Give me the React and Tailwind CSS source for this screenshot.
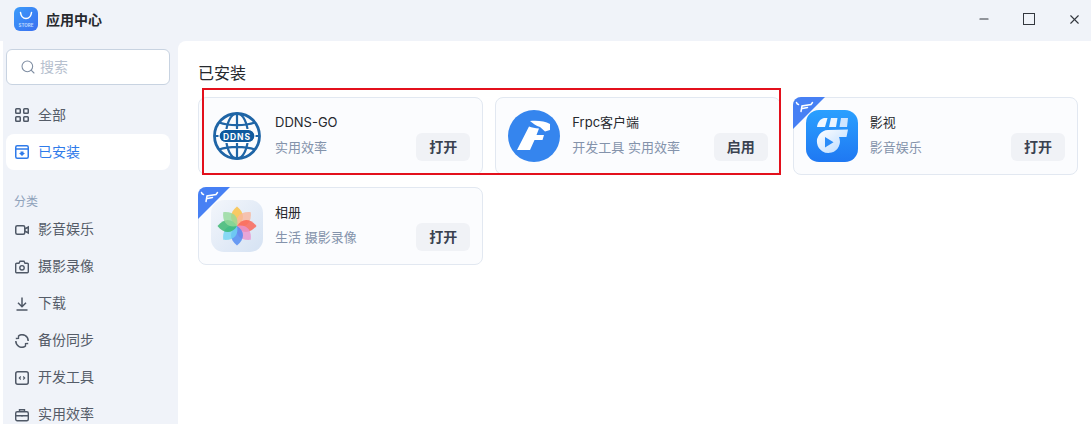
import { Search, Minus, X } from "lucide-react";

const FONT = "font-['Inter','Noto_Sans_CJK_SC',sans-serif]";

function GridIcon() {
  return (
    <svg width="14" height="14" viewBox="0 0 14 14" fill="none" stroke="#4f5866" strokeWidth="1.500">
      <rect x="0.750" y="0.750" width="4.500" height="4.500" rx="0.800" />
      <rect x="8.750" y="0.750" width="4.500" height="4.500" rx="0.800" />
      <rect x="0.750" y="8.750" width="4.500" height="4.500" rx="0.800" />
      <rect x="8.750" y="8.750" width="4.500" height="4.500" rx="0.800" />
    </svg>
  );
}

function VideoIcon() {
  return (
    <svg width="14" height="14" viewBox="0 0 14 14" fill="none" stroke="#4f5866" strokeWidth="1.500">
      <rect x="0.750" y="2.750" width="9" height="8.500" rx="1.500" />
      <path d="M9.750 6l3.500-2v6l-3.500-2" />
    </svg>
  );
}

function CameraIcon() {
  return (
    <svg width="14" height="14" viewBox="0 0 14 14" fill="none" stroke="#4f5866" strokeWidth="1.400">
      <path d="M.7 4.200a1 1 0 0 1 1-1h2.300L5 1.200h4l1 2h2.300a1 1 0 0 1 1 1v7.600a1 1 0 0 1-1 1H1.700a1 1 0 0 1-1-1z" />
      <circle cx="7" cy="7.800" r="2.200" />
    </svg>
  );
}

function DownloadIcon() {
  return (
    <svg width="14" height="14" viewBox="0 0 14 14" fill="none" stroke="#4f5866" strokeWidth="1.500">
      <path d="M7 .5v9M3 5.800l4 4 4-4M1.500 13h11" />
    </svg>
  );
}

function SyncIcon() {
  return (
    <svg width="14" height="14" viewBox="0 0 14 14" fill="none" stroke="#4f5866" strokeWidth="1.500">
      <path d="M3.500 1.800a6.200 6.200 0 0 1 9.700 5.200M10.500 12.200A6.200 6.200 0 0 1 .8 7" />
      <path d="M.8 4.500l2.700-.200V1.500M13.200 9.500l-2.700.200v2.800" strokeWidth="1.300" />
    </svg>
  );
}

function CodeIcon() {
  return (
    <svg width="14" height="14" viewBox="0 0 14 14" fill="none" stroke="#4f5866" strokeWidth="1.500">
      <rect x="0.750" y="0.750" width="12.500" height="12.500" rx="2" />
      <path d="M5.800 5.500L4.300 7l1.500 1.500M8.200 5.500L9.700 7 8.200 8.500" strokeWidth="1.100" />
    </svg>
  );
}

function CaseIcon() {
  return (
    <svg width="14" height="14" viewBox="0 0 14 14" fill="none" stroke="#4f5866" strokeWidth="1.400">
      <rect x="0.700" y="3.700" width="12.600" height="9" rx="1.500" />
      <path d="M4.500 3.700V1.700h5v2M.7 7.800h12.600M7 7v1.800" />
    </svg>
  );
}

const CATEGORIES = [
  { label: "影音娱乐", icon: VideoIcon },
  { label: "摄影录像", icon: CameraIcon },
  { label: "下载", icon: DownloadIcon },
  { label: "备份同步", icon: SyncIcon },
  { label: "开发工具", icon: CodeIcon },
  { label: "实用效率", icon: CaseIcon },
];

function StoreLogo() {
  return (
    <svg width="24" height="24" viewBox="0 0 24 24">
      <defs>
        <linearGradient id="store" x1="0" y1="0" x2="1" y2="1">
          <stop offset="0" stopColor="#3b9bfa" />
          <stop offset="1" stopColor="#3b6ff0" />
        </linearGradient>
      </defs>
      <rect width="24" height="24" rx="6" fill="url(#store)" />
      <path d="M6.500 5.500c.5 4 2.500 6 5.500 6s5-2 5.500-6" fill="none" stroke="#fff" strokeWidth="1.500" strokeLinecap="round" />
      <text x="12" y="19.500" textAnchor="middle" fontSize="4.500" fontWeight="700" fill="#bcd8ff" fontFamily="Inter">STORE</text>
    </svg>
  );
}

function InstalledIcon() {
  return (
    <svg width="14" height="14" viewBox="0 0 14 14" fill="none">
      <rect x="0.750" y="0.750" width="12.500" height="12.500" rx="1.500" stroke="#2f7bea" strokeWidth="1.500" />
      <path d="M1 4h12" stroke="#2f7bea" strokeWidth="1.500" />
      <path d="M5.500 6.500h3v1.500h1.500L7 11 4 8h1.500z" fill="#2f7bea" />
    </svg>
  );
}

function DdnsIcon() {
  return (
    <svg width="48" height="48" viewBox="0 0 48 48" fill="none">
      <g stroke="#1f65a6" strokeWidth="2.200">
        <circle cx="24" cy="24" r="22.500" strokeWidth="2.800" />
        <ellipse cx="24" cy="24" rx="11" ry="22.500" />
        <path d="M24 1.500v45M6 10.500c10 3.500 26 3.500 36 0M6 37.500c10-3.500 26-3.500 36 0M2 24h44" />
      </g>
      <rect x="6" y="17.500" width="36" height="13" rx="6.500" fill="#0f5a9e" stroke="#fff" strokeWidth="1.200" />
      <text x="24" y="27.500" textAnchor="middle" fontSize="8.500" fontWeight="700" letterSpacing="0.900" fill="#fff" fontFamily="Inter">DDNS</text>
    </svg>
  );
}

function FrpcIcon() {
  return (
    <svg width="52" height="52" viewBox="0 0 52 52">
      <circle cx="26" cy="26" r="26" fill="#3585ee" />
      <path d="M22 11 C30 10.500 37 11 42 14 L42 20 L37 21.500 L32 17 C28 16 25 13.500 22 11z" fill="#fff" />
      <path d="M21 16.500 C24 17.500 27 18.200 31 18.500 L28.500 25 H36 L34.500 30 H26.500 L22 40 H9z" fill="#fff" />
    </svg>
  );
}

function MovieIcon() {
  return (
    <svg width="52" height="52" viewBox="0 0 52 52">
      <defs>
        <linearGradient id="movie" x1="0" y1="0" x2="0" y2="1">
          <stop offset="0" stopColor="#2aa0ff" />
          <stop offset="1" stopColor="#1f78f2" />
        </linearGradient>
        <linearGradient id="reel" x1="0" y1="0" x2="1" y2="1">
          <stop offset="0" stopColor="#ffffff" />
          <stop offset="1" stopColor="#b7d9ff" />
        </linearGradient>
      </defs>
      <rect width="52" height="52" rx="13" fill="url(#movie)" />
      <path d="M11 17 C11.500 12.500 14 9 18 8 H21.500 L19 17z" fill="#f2f8ff" />
      <path d="M25 8h6.500l-1.500 9h-7z" fill="#eaf4ff" />
      <path d="M35 8h7l-1 9h-7.500z" fill="#cfe5ff" />
      <path d="M42 19.500 L40.500 27 H33 A11.500 11.500 0 1 1 22 20z" fill="url(#reel)" />
      <path d="M19 27v10.500l8.500-5.200z" fill="#2a8cf8" />
    </svg>
  );
}

function AlbumIcon() {
  const petals = [
    { r: 0, c: "#fbbf3d" },
    { r: 45, c: "#f9b79c" },
    { r: 90, c: "#fb5f4f" },
    { r: 135, c: "#e993cf" },
    { r: 180, c: "#4a86f3" },
    { r: 225, c: "#6fd3f2" },
    { r: 270, c: "#33b56a" },
    { r: 315, c: "#94d99a" },
  ];
  return (
    <svg width="52" height="52" viewBox="0 0 52 52">
      <defs>
        <linearGradient id="album" x1="0" y1="0" x2="1" y2="1">
          <stop offset="0" stopColor="#f3f6fb" />
          <stop offset="1" stopColor="#d5e2f3" />
        </linearGradient>
      </defs>
      <rect width="52" height="52" rx="13" fill="url(#album)" />
      {petals.map((p) => (
        <path
          key={p.r}
          d="M26 26 C18 21 18 13 26 6.500 C34 13 34 21 26 26z"
          fill={p.c}
          fillOpacity="0.800"
          transform={`rotate(${p.r} 26 26)`}
        />
      ))}
    </svg>
  );
}

// blue corner ribbon with the little horns mark
function Ribbon() {
  return (
    <svg className="absolute -left-px -top-px" width="33" height="33" viewBox="0 0 33 33">
      <path d="M8 0H32L0 32V8A8 8 0 0 1 8 0z" fill="#4780f4" />
      <path d="M3.500 5.500c.3 1.200 1 1.800 2 2M8 14.500l1-5.500 9-1.500 1.500-2M9.500 11.500l5-1" fill="none" stroke="#fff" strokeWidth="1.500" strokeLinecap="round" />
    </svg>
  );
}

function AppCard({ name, tags, action, icon, ribbon }) {
  return (
    <div className="relative flex h-[78px] items-center rounded-lg border border-[#e2e8f1] bg-[#fbfcfe] pl-3 pr-3">
      {ribbon && <Ribbon />}
      <div className="flex w-[52px] shrink-0 justify-center">{icon}</div>
      <div className="ml-3 flex h-full min-w-0 flex-1 flex-col pt-[14px]">
        <div className="text-[13px] leading-[20px] text-[#26292e]">{name}</div>
        <div className="mt-[5px] text-[13px] leading-[20px] text-[#8493ab]">{tags}</div>
      </div>
      <button className="mt-[22px] flex h-[28px] w-[54px] shrink-0 items-center justify-center rounded-md bg-[#f0f2f6] pb-[2px] text-[14px] font-semibold text-[#3a4250]">
        {action}
      </button>
    </div>
  );
}

export default function App() {
  return (
    <div className={`flex h-screen flex-col overflow-hidden bg-[#f0f3f9] ${FONT}`}>
      {/* Title bar */}
      <header className="flex h-[41px] shrink-0 items-center pb-[3px] pl-[14px]">
        <StoreLogo />
        <span className="ml-2 text-[14px] font-semibold text-[#26292e]">应用中心</span>
        <div className="ml-auto flex items-center gap-[32px] pr-[9px] text-[#33373e]">
          <Minus size={14} strokeWidth={1.800} />
          <span className="h-[12px] w-[12px] border-[1.5px] border-[#33373e]" />
          <X size={15} strokeWidth={1.800} />
        </div>
      </header>

      <div className="flex min-h-0 flex-1">
        {/* Sidebar */}
        <aside className="w-[178px] shrink-0 overflow-hidden border-l-[3px] border-white pl-[3px] pr-2 pt-2">
          <div className="flex h-[36px] items-center gap-[4px] rounded-md border border-[#c8d3e1] bg-white pl-[13px] text-[14px] text-[#b6c0ce]">
            <Search size={16} strokeWidth={1.600} className="text-[#7f8ea3]" />
            <span className="mb-[2px]">搜索</span>
          </div>

          <div className="mt-[12px] flex h-[36px] items-center gap-[9px] pl-[9px] text-[14px] text-[#555c68]">
            <GridIcon />
            <span className="mb-[2px]">全部</span>
          </div>
          <div className="mt-px flex h-[36px] items-center gap-[9px] rounded-lg bg-white pl-[9px] text-[14px] text-[#2f7bea]">
            <InstalledIcon />
            <span className="mb-[2px]">已安装</span>
          </div>

          <div className="mt-[23px] pl-2 text-[12px] leading-[18px] text-[#8fa2bb]">分类</div>
          {CATEGORIES.map(({ label, icon: Icon }) => (
            <div key={label} className="flex h-[37px] items-center gap-[9px] pl-[9px] text-[14px] text-[#555c68]">
              <Icon />
              <span className="mb-[2px]">{label}</span>
            </div>
          ))}
        </aside>

        {/* Main */}
        <main className="relative min-w-0 flex-1 rounded-tl-lg bg-white pl-5 pr-[13px] pt-[22px]">
          <h2 className="text-[16px] leading-[20px] text-[#26292e]">已安装</h2>
          <div className="mt-[14px] grid grid-cols-3 gap-x-3 gap-y-3">
            <AppCard name="DDNS-GO" tags="实用效率" action="打开" icon={<DdnsIcon />} />
            <AppCard name="Frpc客户端" tags="开发工具 实用效率" action="启用" icon={<FrpcIcon />} />
            <AppCard name="影视" tags="影音娱乐" action="打开" icon={<MovieIcon />} ribbon />
            <AppCard name="相册" tags="生活 摄影录像" action="打开" icon={<AlbumIcon />} ribbon />
          </div>
          {/* annotation box */}
          <div className="absolute left-[24px] top-[47px] h-[87px] w-[579px] border-2 border-[#e3101c]" />
        </main>
      </div>
    </div>
  );
}
